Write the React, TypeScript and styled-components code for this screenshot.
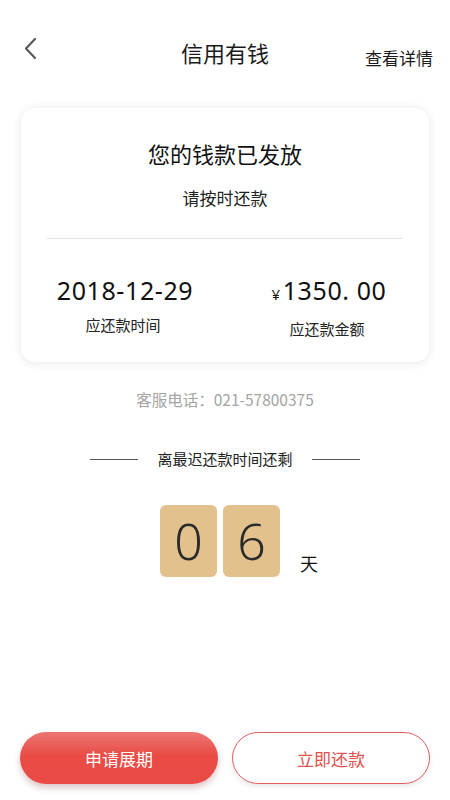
import React from "react";
import styled, { createGlobalStyle } from "styled-components";

const Global = createGlobalStyle`
  html, body { margin: 0; padding: 0; background: #fff; }
  body { font-family: "Noto Sans CJK SC", "Noto Sans", sans-serif; color: #222; }
`;

const Page = styled.div`
  width: 450px;
  height: 800px;
  display: flex;
  flex-direction: column;
  background: #fff;
  box-sizing: border-box;
`;

const Header = styled.div`
  height: 104px;
  display: grid;
  grid-template-columns: 90px 1fr 90px;
  align-items: start;
`;

const Back = styled.div`
  padding: 37px 0 0 22px;
`;

const Title = styled.div`
  padding-top: 37px;
  text-align: center;
  font-size: 22px;
  line-height: 30px;
  color: #1a1a1a;
`;

const Detail = styled.div`
  padding-top: 46px;
  text-align: right;
  padding-right: 17px;
  font-size: 17px;
  line-height: 24px;
  color: #1a1a1a;
  white-space: nowrap;
`;

const Card = styled.div`
  margin: 4px 21px 0;
  height: 254px;
  border-radius: 14px;
  background: #fff;
  box-shadow: 0 1px 10px rgba(0, 0, 0, 0.1);
  display: flex;
  flex-direction: column;
  align-items: center;
`;

const CardTitle = styled.div`
  margin-top: 30px;
  font-size: 22px;
  line-height: 30px;
  color: #111;
`;

const CardSub = styled.div`
  margin-top: 18px;
  font-size: 17px;
  line-height: 24px;
  color: #222;
`;

const Divider = styled.div`
  margin-top: 28px;
  width: 356px;
  height: 1px;
  background: #e4e4e4;
`;

const Stats = styled.div`
  width: 100%;
  display: grid;
  grid-template-columns: 1fr 1fr;
  margin-top: 36px;
`;

const Stat = styled.div`
  display: flex;
  flex-direction: column;
  align-items: center;
`;

const Value = styled.div<{ $shift?: number }>`
  font-family: "Noto Sans", sans-serif;
  font-size: 25px;
  line-height: 30px;
  letter-spacing: 0.6px;
  color: #111;
  margin-left: ${(p) => p.$shift ?? 0}px;
`;

const Yen = styled.span`
  font-size: 15px;
  margin-right: 2px;
`;

const Label = styled.div`
  margin-top: 10px;
  font-size: 15px;
  line-height: 20px;
  color: #222;
`;

const Phone = styled.div`
  margin-top: 27px;
  text-align: center;
  font-size: 15.5px;
  line-height: 20px;
  color: #a4a4a4;
`;

const Countdown = styled.div`
  margin-top: 40px;
  display: flex;
  align-items: center;
  justify-content: center;
  gap: 19px;
  font-size: 15px;
  line-height: 20px;
  color: #222;
`;

const Rule = styled.div`
  width: 48px;
  height: 1px;
  background: #555;
`;

const Digits = styled.div`
  margin-top: 36px;
  display: flex;
  justify-content: center;
  align-items: flex-end;
  padding-left: 28px;
`;

const DigitBox = styled.div`
  width: 57px;
  height: 72px;
  margin-right: 6px;
  border-radius: 6px;
  background: #e3c18d;
  display: flex;
  align-items: center;
  justify-content: center;
  font-family: "Noto Sans", sans-serif;
  font-weight: 300;
  font-size: 50px;
  color: #2a2a2a;
`;

const Unit = styled.div`
  margin-left: 14px;
  margin-bottom: 2px;
  font-size: 18px;
  line-height: 24px;
  color: #111;
`;

const Spacer = styled.div`
  flex: 1;
`;

const Buttons = styled.div`
  display: grid;
  grid-template-columns: 198px 198px;
  justify-content: space-between;
  padding: 0 20px 16px 20px;
`;

const Button = styled.div<{ $primary?: boolean }>`
  height: 52px;
  border-radius: 26px;
  box-sizing: border-box;
  display: flex;
  align-items: center;
  justify-content: center;
  font-size: 17px;
  ${(p) =>
    p.$primary
      ? `background: linear-gradient(180deg, #ec7672 0%, #ea4b45 45%, #ea4a45 100%);
         color: #fff;
         box-shadow: 0 4px 6px rgba(120, 40, 40, 0.25);`
      : `background: #fff;
         border: 1.5px solid #e06060;
         color: #e0514d;
         box-shadow: 0 3px 5px rgba(0, 0, 0, 0.08);`}
`;

export default function App() {
  return (
    <Page>
      <Global />
      <Header>
        <Back>
          <svg width="16" height="24" viewBox="0 0 16 24">
            <path d="M13 2 L4 11.5 L13 21" fill="none" stroke="#5a5a5a" strokeWidth="2.2" strokeLinecap="round" strokeLinejoin="round" />
          </svg>
        </Back>
        <Title>信用有钱</Title>
        <Detail>查看详情</Detail>
      </Header>
      <Card>
        <CardTitle>您的钱款已发放</CardTitle>
        <CardSub>请按时还款</CardSub>
        <Divider />
        <Stats>
          <Stat>
            <Value $shift={4}>2018-12-29</Value>
            <Label>应还款时间</Label>
          </Stat>
          <Stat>
            <Value $shift={4}><Yen>¥</Yen>1350. 00</Value>
            <Label>应还款金额</Label>
          </Stat>
        </Stats>
      </Card>
      <Phone>客服电话：021-57800375</Phone>
      <Countdown>
        <Rule />
        <span>离最迟还款时间还剩</span>
        <Rule />
      </Countdown>
      <Digits>
        <DigitBox>0</DigitBox>
        <DigitBox>6</DigitBox>
        <Unit>天</Unit>
      </Digits>
      <Spacer />
      <Buttons>
        <Button $primary>申请展期</Button>
        <Button>立即还款</Button>
      </Buttons>
    </Page>
  );
}
